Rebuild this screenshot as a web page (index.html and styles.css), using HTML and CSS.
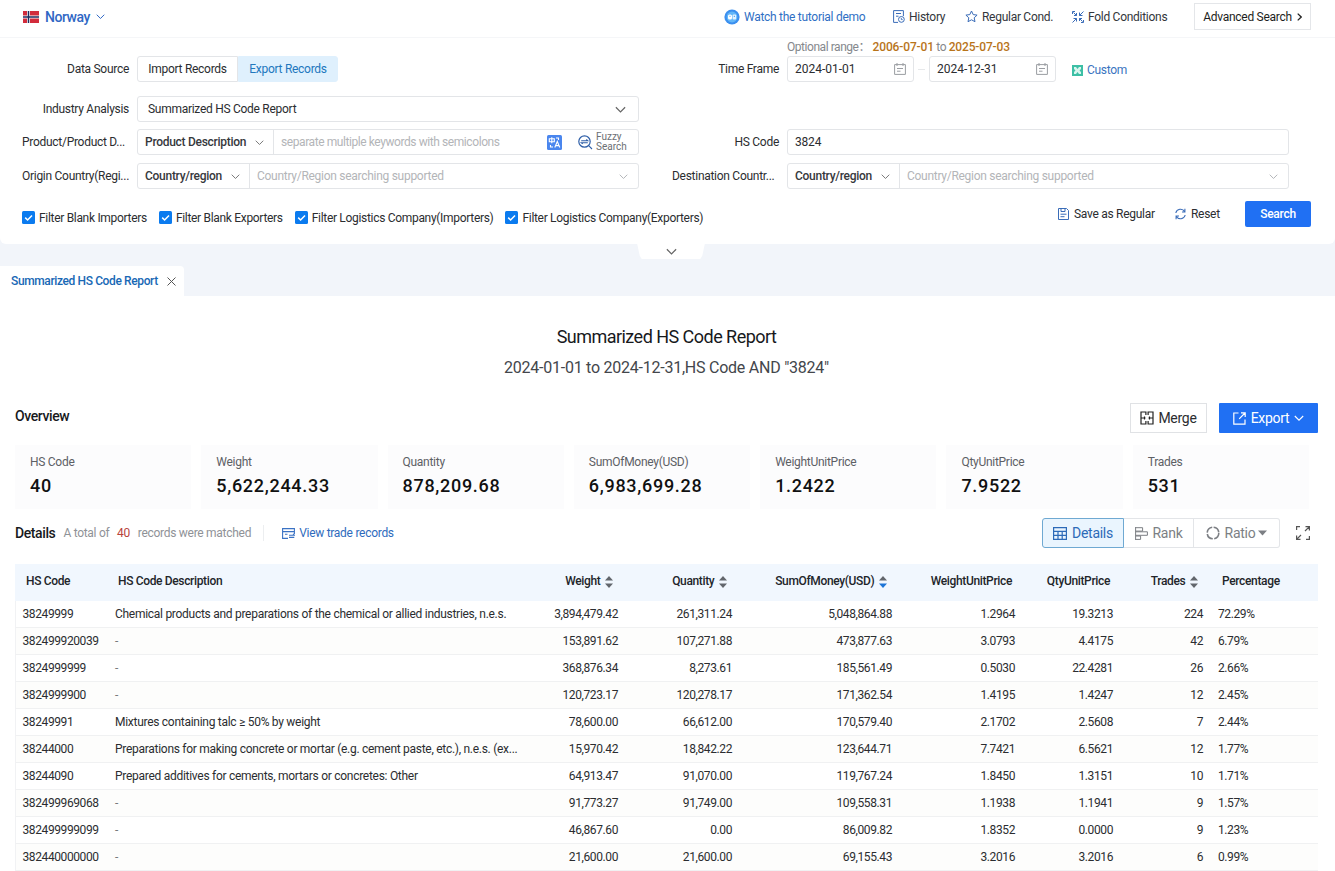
FILE: index.html
```html
<!DOCTYPE html>
<html lang="en">
<head>
    <meta charset="UTF-8">
    <meta name="viewport" content="width=device-width, initial-scale=1.0">
    <title>Summarized HS Code Report</title>
    <link rel="stylesheet" href="styles.css">
</head>
<body>
    <!-- shared icons -->
    <svg class="sprite" width="0" height="0">
        <symbol id="i-down" viewBox="0 0 10 10"><path d="M.8 3L5 7.200 9.200 3" fill="none" stroke="currentColor" stroke-width="1.100"/></symbol>
        <symbol id="i-cal" viewBox="0 0 12 12"><path d="M.6 1.6h10.8v9.8H.6zM3 0v3M9 0v3M3 5.5h6M3 8.2h3.5" fill="none" stroke="currentColor"/></symbol>
        <symbol id="i-check" viewBox="0 0 13 13"><rect width="13" height="13" rx="1.5" fill="#0b7bef"/><path d="M3.2 6.6l2.4 2.4 4.4-4.6" fill="none" stroke="#fff" stroke-width="1.5"/></symbol>
        <symbol id="i-sort" viewBox="0 0 8 12"><path d="M4 0l4 4.6H0z" fill="#62666c"/><path class="sort-down" d="M4 12L0 7.4h8z" fill="currentColor"/></symbol>
    </svg>

    <div class="search-panel">
        <header class="topbar">
            <div class="country">
                <svg width="16" height="12" viewBox="0 0 16 12"><path fill="#d22c3c" d="M0 0h16v12H0z"/><path d="M5.5 0v12M0 6h16" stroke="#fff" stroke-width="3"/><path d="M5.5 0v12M0 6h16" stroke="#1d2b5e" stroke-width="1.5"/></svg>
                <span>Norway</span>
                <svg width="9" height="9"><use href="#i-down"/></svg>
            </div>
            <nav class="top-links">
                <a class="tutorial">
                    <svg width="16" height="16" viewBox="0 0 16 16"><circle cx="8" cy="8" r="7.6" fill="#3b8fef"/><circle cx="8" cy="8" r="5.400" fill="#62b6f8"/><rect x="4" y="5.400" width="4" height="5" rx="1.500" fill="#fff"/><rect x="8.600" y="5.400" width="3.600" height="5" rx="1" fill="#e3f3ff"/><path d="M5.5 7.300h1M9.800 7.300h1.200" stroke="#3b93ef"/></svg>
                    Watch the tutorial demo
                </a>
                <a class="history">
                    <svg width="12" height="13" viewBox="0 0 12 13"><path d="M5 12.4H.6V.6h9.8V6M3 3.5h5M3 6.2h2.5" fill="none" stroke="#3a6cb8"/><circle cx="8.4" cy="9.4" r="2.9" fill="#fff" stroke="#3a6cb8"/><path d="M8.3 7.9v1.7h1.4" fill="none" stroke="#3a6cb8" stroke-width=".9"/></svg>
                    History
                </a>
                <a class="regular">
                    <svg width="13" height="13" viewBox="0 0 13 13"><path d="M6.5 1l1.7 3.6 3.9.5-2.9 2.7.8 3.9-3.5-1.9L3 11.7l.8-3.9L.9 5.1l3.9-.5z" fill="none" stroke="#3a6cb8"/></svg>
                    Regular Cond.
                </a>
                <a class="fold">
                    <svg width="12" height="12" viewBox="0 0 12 12"><path d="M.5 3V.5H3M1.500 1.500l3 3M4.500 2v2.500H2M7.500 1.500v3h3M7.500 4.500l4-4M4.500 10.500v-3h-3M4.500 7.500l-4 4M11.500 9v2.500H9M10.500 10.500l-3-3M7.500 10V7.500H10" fill="none" stroke="#3a6cb8"/></svg>
                    Fold Conditions
                </a>
                <button class="advanced">Advanced Search <svg width="5" height="8" viewBox="0 0 5 8"><path d="M.7.6L4.2 4 .7 7.4" fill="none" stroke="#222" stroke-width="1.3"/></svg></button>
            </nav>
        </header>

        <div class="form">
            <div class="form-row source-row">
                <label>Data Source</label>
                <div class="control switch">
                    <span>Import Records</span>
                    <span class="active">Export Records</span>
                </div>
                <label>Time Frame</label>
                <div class="control dates">
                    <div class="range">Optional range： <b>2006-07-01</b> to <b>2025-07-03</b></div>
                    <div class="date box">2024-01-01 <svg width="12" height="12"><use href="#i-cal"/></svg></div>
                    <i class="dash"></i>
                    <div class="date box">2024-12-31 <svg width="12" height="12"><use href="#i-cal"/></svg></div>
                    <a class="custom">
                        <svg width="11" height="11" viewBox="0 0 11 11"><path fill="#3dbfa5" d="M0 0h11v11H0z"/><path d="M2 2h2l1.5 2L7 2h2v2L7.5 5.5 9 7v2H7L5.5 7 4 9H2V7l1.500-1.500L2 4z" fill="#d9f5ee"/></svg>
                        Custom
                    </a>
                </div>
            </div>
            <div class="form-row analysis-row">
                <label>Industry Analysis</label>
                <div class="control box analysis">Summarized HS Code Report <svg width="11" height="11"><use href="#i-down"/></svg></div>
            </div>
            <div class="form-row">
                <label class="cut">Product/Product D...</label>
                <div class="control box group">
                    <div class="pick product">Product Description <svg width="9" height="9"><use href="#i-down"/></svg></div>
                    <div class="hint keywords">separate multiple keywords with semicolons</div>
                    <svg class="translate" width="15" height="15" viewBox="0 0 15 15"><rect width="15" height="15" rx="1.5" fill="#4a86ee"/><path d="M2.300 3.700h5v3h-5zM4.800 2.300v6M9 3h2.500v2M3.500 10v2H6M7.800 12.500l2.500-6 2.500 6M8.600 10.600h3.400" fill="none" stroke="#fff" stroke-width="1.100"/></svg>
                    <svg class="lens" width="15" height="15" viewBox="0 0 15 15"><circle cx="6.500" cy="6.500" r="5.700" fill="none" stroke="#2f5fa8" stroke-width="1.200"/><path d="M10.700 10.700l3.300 3.300M3.200 5.700h6.500L8.300 4.500M9.800 7.700H3.300l1.400 1.200" fill="none" stroke="#2f5fa8" stroke-width="1.100"/></svg>
                    <div class="fuzzy">Fuzzy<br>Search</div>
                </div>
                <label>HS Code</label>
                <div class="control box hs">3824</div>
            </div>
            <div class="form-row">
                <label class="cut">Origin Country(Regi...</label>
                <div class="control box group">
                    <div class="pick">Country/region <svg width="9" height="9"><use href="#i-down"/></svg></div>
                    <div class="hint">Country/Region searching supported</div>
                    <svg class="arrow" width="9" height="9"><use href="#i-down"/></svg>
                </div>
                <label class="cut dest">Destination Countr...</label>
                <div class="control box group">
                    <div class="pick">Country/region <svg width="9" height="9"><use href="#i-down"/></svg></div>
                    <div class="hint">Country/Region searching supported</div>
                    <svg class="arrow" width="9" height="9"><use href="#i-down"/></svg>
                </div>
            </div>
        </div>

        <div class="actions">
            <div class="filters">
                <span><svg width="13" height="13"><use href="#i-check"/></svg>Filter Blank Importers</span>
                <span><svg width="13" height="13"><use href="#i-check"/></svg>Filter Blank Exporters</span>
                <span><svg width="13" height="13"><use href="#i-check"/></svg>Filter Logistics Company(Importers)</span>
                <span><svg width="13" height="13"><use href="#i-check"/></svg>Filter Logistics Company(Exporters)</span>
            </div>
            <div class="buttons">
                <a class="save">
                    <svg width="11" height="12" viewBox="0 0 11 12"><path d="M.5.500h8L10.500 2.500v9H.500zM3 .5v3h4v-3M2.500 6.200h6M2.500 8.700h4" fill="none" stroke="#3a6cb8"/></svg>
                    Save as Regular
                </a>
                <a class="reset">
                    <svg width="11" height="12" viewBox="0 0 11 12"><path d="M.8 5A4.800 4.800 0 0 1 9.700 3.800M9.900.8v3.200H7M10.200 7A4.800 4.800 0 0 1 1.300 8.200M1.100 11.200V8H4" fill="none" stroke="#3a6cb8" stroke-width="1.100"/></svg>
                    Reset
                </a>
                <button class="search">Search</button>
            </div>
        </div>
        <div class="handle"><svg width="11" height="11"><use href="#i-down"/></svg></div>
    </div>

    <div class="tabs">
        <div class="tab">Summarized HS Code Report <svg width="9" height="9" viewBox="0 0 9 9"><path d="M.5.5l8 8M8.500.5l-8 8" stroke="#555" fill="none"/></svg></div>
    </div>

    <main class="report">
        <h1>Summarized HS Code Report</h1>
        <p class="subtitle">2024-01-01 to 2024-12-31,HS Code AND "3824"</p>

        <div class="overview-head">
            <h2>Overview</h2>
            <button class="merge">
                <svg width="14" height="14" viewBox="0 0 14 14"><path d="M5.900 4V1H1v12h4.900v-3M8.100 4V1H13v12H8.100v-3M1 7h4.500M8.500 7H13M4.500 5.500v3M9.500 5.500v3" fill="none" stroke="#222" stroke-width="1.200"/></svg>
                Merge
            </button>
            <button class="export">
                <svg width="13" height="13" viewBox="0 0 13 13"><path d="M5.500 1H.800v11.200H12V7.500M8 .8h4.200V5M12 1L6.200 6.800" fill="none" stroke="#fff" stroke-width="1.200"/></svg>
                Export
                <svg class="caret" width="10" height="10"><use href="#i-down"/></svg>
            </button>
        </div>

        <div class="cards">
            <div class="card"><span>HS Code</span><strong>40</strong></div>
            <div class="card"><span>Weight</span><strong>5,622,244.33</strong></div>
            <div class="card"><span>Quantity</span><strong>878,209.68</strong></div>
            <div class="card"><span>SumOfMoney(USD)</span><strong>6,983,699.28</strong></div>
            <div class="card"><span>WeightUnitPrice</span><strong>1.2422</strong></div>
            <div class="card"><span>QtyUnitPrice</span><strong>7.9522</strong></div>
            <div class="card"><span>Trades</span><strong>531</strong></div>
        </div>

        <div class="details-head">
            <h2>Details</h2>
            <div class="matched">A total of <em>40</em> records were matched</div>
            <a class="view">
                <svg width="13" height="11" viewBox="0 0 13 11"><path d="M6 10.400H.600V.600h11.800V6M.600 3.600h11.800M3 6.300h2.500M7 7.200h5.500L11 5.900M12.300 9.400H7" fill="none" stroke="#3a72c4" stroke-width="1.100"/></svg>
                View trade records
            </a>
            <div class="views">
                <span class="active">
                    <svg width="14" height="13" viewBox="0 0 14 13"><path d="M.600.700h12.800v11.600H.600zM.600 4.300h12.800M.600 8.300h12.800M5 4.300v8M9.200 4.300v8" fill="none" stroke="currentColor" stroke-width="1.200"/></svg>
                    Details
                </span>
                <span class="rank">
                    <svg width="13" height="13" viewBox="0 0 13 13"><path d="M.600 0v13M.600.700h7v3.400h-7M.600 4.800h11.800v3.500H.600M.600 9h5v3.400h-5" fill="none" stroke="currentColor"/></svg>
                    Rank
                </span>
                <span class="ratio">
                    <svg width="14" height="14" viewBox="0 0 14 14"><circle cx="7" cy="7" r="5.800" fill="none" stroke="currentColor" stroke-width="1.600" stroke-dasharray="7.600 1.500"/></svg>
                    Ratio
                    <svg class="tri" width="9" height="6" viewBox="0 0 9 6"><path d="M0 .500h9L4.500 5.500z" fill="currentColor"/></svg>
                </span>
            </div>
            <svg class="full" width="14" height="14" viewBox="0 0 14 14"><path d="M.600 4V.600H4M9.500.600h3.900v3.900M13.200.800L9 5M13.400 10v3.400H10M4.500 13.400H.600V9.500M.800 13.200L5 9" fill="none" stroke="#555" stroke-width="1.200"/></svg>
        </div>

        <table class="grid">
            <colgroup>
                <col class="c-code"><col class="c-desc"><col class="c-weight"><col class="c-qty"><col class="c-sum"><col class="c-wup"><col class="c-qup"><col class="c-trades"><col>
            </colgroup>
            <thead>
                <tr>
                    <th>HS Code</th>
                    <th>HS Code Description</th>
                    <th class="sortable">Weight <svg width="8" height="12"><use href="#i-sort"/></svg></th>
                    <th class="sortable">Quantity <svg width="8" height="12"><use href="#i-sort"/></svg></th>
                    <th class="sortable sorted">SumOfMoney(USD) <svg width="8" height="12"><use href="#i-sort"/></svg></th>
                    <th>WeightUnitPrice</th>
                    <th>QtyUnitPrice</th>
                    <th class="sortable">Trades <svg width="8" height="12"><use href="#i-sort"/></svg></th>
                    <th>Percentage</th>
                </tr>
            </thead>
            <tbody>
                <tr><td>38249999</td><td>Chemical products and preparations of the chemical or allied industries, n.e.s.</td><td>3,894,479.42</td><td>261,311.24</td><td>5,048,864.88</td><td>1.2964</td><td>19.3213</td><td>224</td><td>72.29%</td></tr>
                <tr><td>382499920039</td><td class="none">-</td><td>153,891.62</td><td>107,271.88</td><td>473,877.63</td><td>3.0793</td><td>4.4175</td><td>42</td><td>6.79%</td></tr>
                <tr><td>3824999999</td><td class="none">-</td><td>368,876.34</td><td>8,273.61</td><td>185,561.49</td><td>0.5030</td><td>22.4281</td><td>26</td><td>2.66%</td></tr>
                <tr><td>3824999900</td><td class="none">-</td><td>120,723.17</td><td>120,278.17</td><td>171,362.54</td><td>1.4195</td><td>1.4247</td><td>12</td><td>2.45%</td></tr>
                <tr><td>38249991</td><td>Mixtures containing talc ≥ 50% by weight</td><td>78,600.00</td><td>66,612.00</td><td>170,579.40</td><td>2.1702</td><td>2.5608</td><td>7</td><td>2.44%</td></tr>
                <tr><td>38244000</td><td>Preparations for making concrete or mortar (e.g. cement paste, etc.), n.e.s. (ex...</td><td>15,970.42</td><td>18,842.22</td><td>123,644.71</td><td>7.7421</td><td>6.5621</td><td>12</td><td>1.77%</td></tr>
                <tr><td>38244090</td><td>Prepared additives for cements, mortars or concretes: Other</td><td>64,913.47</td><td>91,070.00</td><td>119,767.24</td><td>1.8450</td><td>1.3151</td><td>10</td><td>1.71%</td></tr>
                <tr><td>382499969068</td><td class="none">-</td><td>91,773.27</td><td>91,749.00</td><td>109,558.31</td><td>1.1938</td><td>1.1941</td><td>9</td><td>1.57%</td></tr>
                <tr><td>382499999099</td><td class="none">-</td><td>46,867.60</td><td>0.00</td><td>86,009.82</td><td>1.8352</td><td>0.0000</td><td>9</td><td>1.23%</td></tr>
                <tr><td>382440000000</td><td class="none">-</td><td>21,600.00</td><td>21,600.00</td><td>69,155.43</td><td>3.2016</td><td>3.2016</td><td>6</td><td>0.99%</td></tr>
            </tbody>
        </table>
    </main>
</body>
</html>
```

FILE: styles.css
```css
* {
    box-sizing: border-box;
}

body {
    margin: 0;
    height: 871px;
    overflow: hidden;
    font-family: Roboto, "Noto Sans CJK SC", sans-serif;
    font-size: 12px;
    line-height: 16px;
    letter-spacing: -0.28px;
    color: #2b2d30;
    background: #f2f5fa;
}

button {
    font: inherit;
    color: inherit;
    padding: 0;
    margin: 0;
    letter-spacing: inherit;
}

svg {
    flex: none;
    display: block;
}

.sprite {
    position: absolute;
}

/* search panel */
.search-panel {
    position: relative;
    height: 244px;
    background: #fff;
    border-radius: 0 0 6px 6px;
}

.topbar {
    height: 38px;
    padding: 0 24px 4px 23px;
    display: flex;
    align-items: center;
    justify-content: space-between;
    border-bottom: 1px solid #f5f6f8;
}

.country {
    display: flex;
    align-items: center;
    gap: 6px;
    font-size: 14px;
    font-weight: 500;
    letter-spacing: -0.48px;
    color: #2f67c4;
}

.top-links {
    display: flex;
    align-items: center;
    color: #33363b;
}

.top-links a {
    display: flex;
    align-items: center;
    gap: 4px;
    white-space: nowrap;
}

.top-links .tutorial {
    width: 169px;
    color: #2f6fc4;
}

.history {
    width: 72px;
}

.regular {
    width: 107px;
}

.fold {
    width: 122px;
}

.advanced {
    width: 117px;
    height: 27px;
    display: flex;
    align-items: center;
    justify-content: center;
    gap: 5px;
    background: #fff;
    border: 1px solid #e4e6e9;
    color: #1c1e21;
}

.form {
    padding: 18px 22px 0;
}

.form-row {
    display: grid;
    grid-template-columns: 107px 502px 132px 502px;
    column-gap: 8px;
    align-items: center;
    height: 26px;
    margin-bottom: 8px;
}

.form-row.source-row {
    margin-bottom: 14px;
}

.form-row.analysis-row {
    margin-bottom: 7px;
}

.form-row label {
    text-align: right;
    white-space: nowrap;
}

.form-row label.cut {
    text-align: left;
}

.form-row label.dest {
    padding-left: 25px;
}

.control {
    display: flex;
    align-items: center;
    height: 26px;
}

.box {
    border: 1px solid #e3e5e8;
    border-radius: 3px;
    background: #fff;
}

.switch span {
    height: 26px;
    width: 101px;
    line-height: 24px;
    text-align: center;
    border: 1px solid #e3e5e8;
    border-radius: 3px 0 0 3px;
}

.switch .active {
    width: 100px;
    background: #dff0fd;
    border-color: #dff0fd;
    border-radius: 0 3px 3px 0;
    color: #2277bd;
}

.dates {
    position: relative;
}

.range {
    position: absolute;
    left: 0;
    top: -17px;
    color: #85888d;
    letter-spacing: -0.45px;
    white-space: nowrap;
}

.range b {
    font-weight: 500;
    letter-spacing: -0.15px;
    color: #b8741a;
}

.date {
    width: 127px;
    height: 26px;
    padding: 0 7px;
    display: flex;
    align-items: center;
    justify-content: space-between;
    letter-spacing: 0;
}

.date svg {
    color: #9a9da2;
}

.dash {
    width: 7px;
    height: 1px;
    margin: 0 4px;
    background: #e6e8ea;
}

.custom {
    display: flex;
    align-items: center;
    gap: 4px;
    margin-left: 16px;
    padding-top: 2px;
    color: #3a74c0;
}

.analysis {
    justify-content: space-between;
    padding: 0 12px 0 10px;
}

.analysis svg {
    color: #666;
}

.pick {
    width: 112px;
    height: 24px;
    padding: 0 9px 0 7px;
    display: flex;
    align-items: center;
    justify-content: space-between;
    border-right: 1px solid #e3e5e8;
    font-weight: 500;
    color: #36383c;
}

.pick svg {
    color: #777;
}

.pick.product {
    width: 136px;
}

.hint {
    flex: 1;
    padding-left: 7px;
    color: #b3b5b8;
}

.hint.keywords {
    letter-spacing: -0.42px;
}

.arrow {
    margin-right: 10px;
    color: #b3b5b8;
}

.translate {
    margin-right: 16px;
}

.fuzzy {
    width: 42px;
    margin-left: 3px;
    font-size: 10px;
    line-height: 10px;
    letter-spacing: 0;
    color: #6c6f74;
}

.hs {
    padding-left: 7px;
    letter-spacing: -0.2px;
}

.actions {
    display: flex;
    justify-content: space-between;
    padding: 4px 24px 0 22px;
}

.filters {
    display: flex;
    align-items: center;
    gap: 12px;
    height: 33px;
}

.filters span {
    display: flex;
    align-items: center;
    gap: 4px;
    letter-spacing: -0.31px;
}

.buttons {
    display: flex;
    align-items: center;
    height: 26px;
}

.buttons a {
    display: flex;
    align-items: center;
    gap: 5px;
}

.save {
    width: 117px;
}

.reset {
    width: 70px;
}

.search {
    width: 66px;
    height: 26px;
    border: 0;
    border-radius: 2px;
    background: #2070f3;
    color: #fff;
    font-weight: 500;
}

/* collapse handle hanging below the panel */
.handle {
    position: absolute;
    left: 637px;
    top: 243px;
    width: 68px;
    height: 16px;
    display: flex;
    align-items: center;
    justify-content: center;
    background: #fff;
    clip-path: polygon(0 0, 100% 0, 96% 80%, 93% 100%, 7% 100%, 4% 80%);
    color: #666;
}

.tabs {
    height: 52px;
    padding-top: 22px;
}

.tab {
    width: 184px;
    height: 30px;
    padding-left: 11px;
    display: flex;
    align-items: center;
    gap: 9px;
    background: #fff;
    border-radius: 0 4px 0 0;
    color: #1868b5;
    font-weight: 500;
    letter-spacing: -0.38px;
}

/* report */
.report {
    height: 575px;
    padding: 28px 17px 0 15px;
    background: #fff;
}

h1 {
    margin: 0;
    font-size: 18px;
    line-height: 26px;
    font-weight: 400;
    letter-spacing: -0.53px;
    text-align: center;
    color: #17191c;
}

.subtitle {
    margin: 8px 0 0;
    font-size: 16px;
    line-height: 20px;
    letter-spacing: -0.24px;
    text-align: center;
    color: #43464b;
}

h2 {
    margin: 0;
    font-size: 14px;
    font-weight: 500;
    letter-spacing: -0.4px;
    color: #17191c;
}

.overview-head {
    display: flex;
    align-items: center;
    height: 30px;
    margin-top: 25px;
    font-size: 14px;
}

.overview-head h2 {
    flex: 1;
    margin-top: -4px;
}

.merge {
    display: flex;
    align-items: center;
    justify-content: center;
    gap: 4px;
    width: 77px;
    height: 30px;
    margin-right: 12px;
    background: #fff;
    border: 1px solid #e0e2e5;
}

.export {
    display: flex;
    align-items: center;
    justify-content: center;
    gap: 5px;
    width: 99px;
    height: 30px;
    border: 0;
    border-radius: 1px;
    background: #2070f3;
    color: #fff;
}

.cards {
    display: flex;
    gap: 10px;
    margin: 12px 9px 0 0;
}

.card {
    flex: 1;
    height: 64px;
    padding: 9px 15px 8px;
    background: #fcfcfd;
}

.card span {
    display: block;
    color: #5d6065;
}

.card strong {
    display: block;
    margin-top: 4px;
    font-size: 18px;
    line-height: 24px;
    font-weight: 500;
    letter-spacing: 0.7px;
    color: #111;
}

.details-head {
    display: flex;
    align-items: center;
    height: 30px;
    margin-top: 9px;
}

.matched {
    margin-left: 8px;
    padding-right: 12px;
    border-right: 1px solid #eceef0;
    color: #8f9297;
    white-space: nowrap;
    letter-spacing: -0.28px;
}

.matched em {
    margin: 0 5px;
    font-style: normal;
    color: #b8443c;
}

.view {
    display: flex;
    align-items: center;
    gap: 4px;
    margin-left: 18px;
    flex: 1;
    color: #2f6bbd;
}

.views {
    display: flex;
    font-size: 14px;
    color: #7c7f84;
}

.views span {
    display: flex;
    align-items: center;
    justify-content: center;
    gap: 5px;
    width: 70px;
    height: 30px;
    border: 1px solid #e3e5e8;
    border-left: 0;
}

.views .active {
    width: 82px;
    border: 1px solid #6fa9d2;
    border-radius: 3px 0 0 3px;
    background: #eaf5fe;
    color: #2c6ab8;
}

.views .ratio {
    width: 86px;
    border-radius: 0 3px 3px 0;
}

.views .tri {
    margin-left: -2px;
}

.full {
    margin: 0 8px 0 16px;
}

/* table */
.grid {
    width: 1303px;
    margin-top: 16px;
    table-layout: fixed;
    border-collapse: separate;
    border-spacing: 0;
    letter-spacing: -0.4px;
}

.c-code { width: 92px; }
.c-desc { width: 419px; }
.c-weight { width: 100px; }
.c-qty { width: 114px; }
.c-sum { width: 160px; }
.c-wup { width: 123px; }
.c-qup { width: 98px; }
.c-trades { width: 90px; }

.grid th,
.grid td {
    white-space: nowrap;
    text-align: right;
}

.grid th {
    height: 37px;
    padding: 0 11px 3px;
    background: #f1f7fe;
    font-weight: 500;
    letter-spacing: -0.35px;
    color: #22252a;
}

.grid th.sortable {
    padding-right: 13px;
    padding-bottom: 4px;
}

.grid th svg {
    display: inline-block;
    vertical-align: -3px;
    margin-left: 2px;
    color: #62666c;
}

.grid th.sorted svg {
    color: #1c74d6;
}

.grid td {
    height: 27px;
    padding: 0 8px 1px;
    border-bottom: 1px solid #f0f1f2;
}

.grid td:first-child {
    padding-left: 6.5px;
    border-left: 1px solid #f1f2f4;
}

.grid td:nth-child(2) {
    letter-spacing: -0.28px;
}

.grid td.none {
    color: #77797d;
}

.grid td:last-child {
    padding-left: 7px;
}

.grid tbody tr:nth-child(even) {
    background: #fdfdfc;
}

.grid th:nth-child(-n+2),
.grid td:nth-child(-n+2),
.grid th:last-child,
.grid td:last-child {
    text-align: left;
}
```
